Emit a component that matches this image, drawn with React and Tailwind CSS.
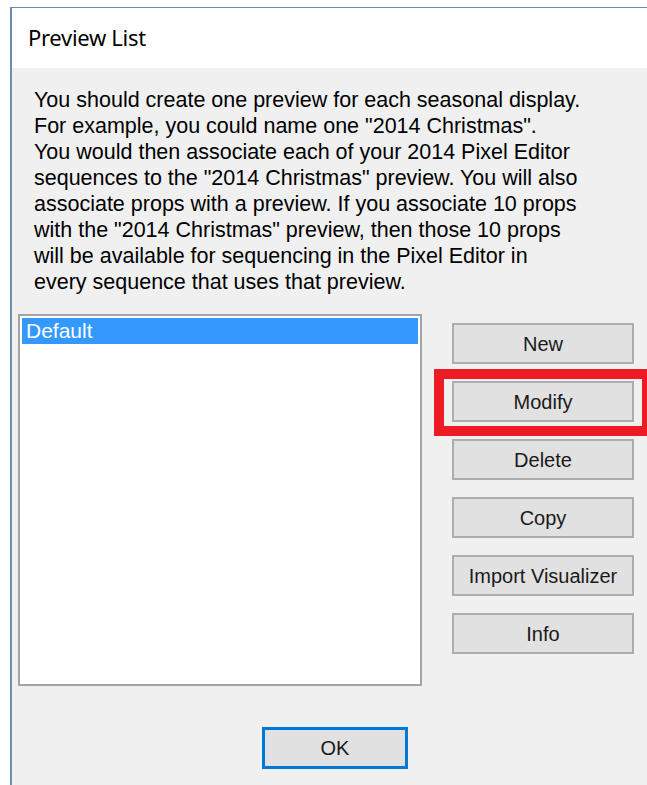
import { useState } from "react";

const lines = [
  "You should create one preview for each seasonal display.",
  'For example, you could name one "2014 Christmas".',
  "You would then associate each of your 2014 Pixel Editor",
  'sequences to the "2014 Christmas" preview. You will also',
  "associate props with a preview. If you associate 10 props",
  'with the "2014 Christmas" preview, then those 10 props',
  "will be available for sequencing in the Pixel Editor in",
  "every sequence that uses that preview.",
];

const actions = ["New", "Modify", "Delete", "Copy", "Import Visualizer", "Info"];

function SideButton({ label }) {
  return (
    <button className="w-[182px] h-[41px] bg-[#e1e1e1] border-2 border-[#adadad] text-[20px] text-[#1a1a1a] leading-none flex items-center justify-center">
      {label}
    </button>
  );
}

export default function App() {
  const [selected] = useState(0);
  const previews = ["Default"];

  return (
    <div className="w-[647px] h-[785px] bg-white overflow-hidden relative font-['Liberation_Sans',Arial,sans-serif]">
      <div className="ml-[10px] mt-[7px] w-[660px] h-[800px] border-t border-l-2 border-[#6f8cb0] flex flex-col">
        {/* title bar */}
        <div className="h-[60px] bg-white flex items-center pl-[16px] pb-[2px]">
          <span className="text-[22px] text-black font-['Noto_Sans','Open_Sans',sans-serif] tracking-[-0.3px]">Preview List</span>
        </div>

        {/* dialog body */}
        <div className="flex-1 bg-[#f0f0f0] flex flex-col">
          <p className="pl-[22px] pt-[19px] text-[21.5px] leading-[26px] text-black">
            {lines.map((l) => (
              <span key={l} className="block whitespace-nowrap">{l}</span>
            ))}
          </p>

          <div className="flex mt-[19px] ml-[6px]">
            <div className="w-[404px] h-[372px] bg-white border-2 border-[#a3a3a3] p-[2px]">
              {previews.map((p, i) => (
                <div
                  key={p}
                  className={
                    i === selected
                      ? "h-[26px] bg-[#3399ff] text-white text-[21px] leading-[26px] pl-[4px]"
                      : "h-[26px] text-black text-[21px] leading-[26px] pl-[4px]"
                  }
                >
                  {p}
                </div>
              ))}
            </div>

            <div className="ml-[30px] mt-[9px] flex flex-col gap-[17px]">
              {actions.map((a) => (
                <SideButton key={a} label={a} />
              ))}
            </div>
          </div>

          <div className="mt-[41px] ml-[250px]">
            <button className="w-[146px] h-[42px] bg-[#e1e1e1] border-[3px] border-[#0078d7] text-[20px] text-[#1a1a1a] flex items-center justify-center">
              OK
            </button>
          </div>
        </div>
      </div>

      {/* red callout around Modify */}
      <div className="absolute left-[434px] top-[369px] w-[218px] h-[67px] border-[10px] border-[#ed1c24]" />
    </div>
  );
}
